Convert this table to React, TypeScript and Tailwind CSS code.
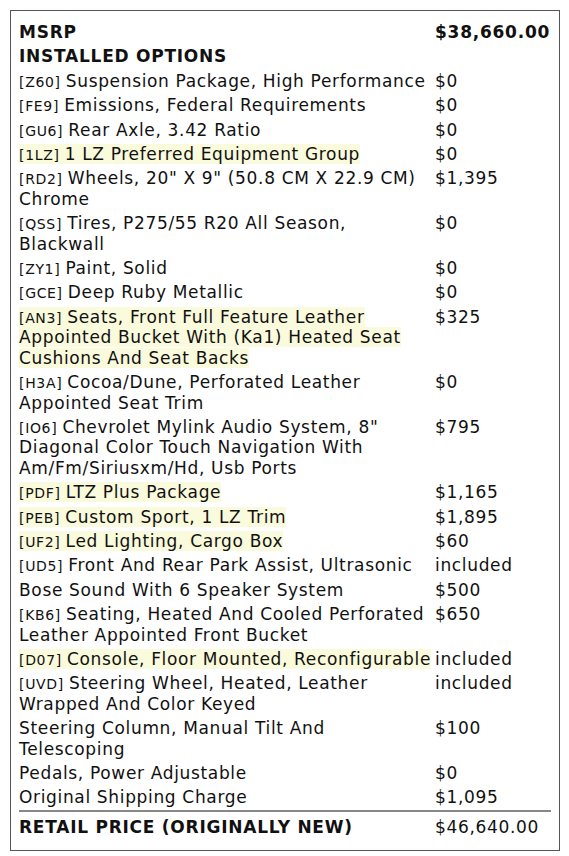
const rows: { code?: string; text: string; price: string; hl?: boolean }[] = [
  { code: "Z60", text: "Suspension Package, High Performance", price: "$0" },
  { code: "FE9", text: "Emissions, Federal Requirements", price: "$0" },
  { code: "GU6", text: "Rear Axle, 3.42 Ratio", price: "$0" },
  { code: "1LZ", text: "1 LZ Preferred Equipment Group", price: "$0", hl: true },
  { code: "RD2", text: "Wheels, 20\" X 9\" (50.8 CM X 22.9 CM) Chrome", price: "$1,395" },
  { code: "QSS", text: "Tires, P275/55 R20 All Season, Blackwall", price: "$0" },
  { code: "ZY1", text: "Paint, Solid", price: "$0" },
  { code: "GCE", text: "Deep Ruby Metallic", price: "$0" },
  {
    code: "AN3",
    text: "Seats, Front Full Feature Leather Appointed Bucket With (Ka1) Heated Seat Cushions And Seat Backs",
    price: "$325",
    hl: true,
  },
  { code: "H3A", text: "Cocoa/Dune, Perforated Leather Appointed Seat Trim", price: "$0" },
  {
    code: "IO6",
    text: "Chevrolet Mylink Audio System, 8\" Diagonal Color Touch Navigation With Am/Fm/Siriusxm/Hd, Usb Ports",
    price: "$795",
  },
  { code: "PDF", text: "LTZ Plus Package", price: "$1,165", hl: true },
  { code: "PEB", text: "Custom Sport, 1 LZ Trim", price: "$1,895", hl: true },
  { code: "UF2", text: "Led Lighting, Cargo Box", price: "$60", hl: true },
  { code: "UD5", text: "Front And Rear Park Assist, Ultrasonic", price: "included" },
  { text: "Bose Sound With 6 Speaker System", price: "$500" },
  { code: "KB6", text: "Seating, Heated And Cooled Perforated Leather Appointed Front Bucket", price: "$650" },
  { code: "D07", text: "Console, Floor Mounted, Reconfigurable", price: "included", hl: true },
  { code: "UVD", text: "Steering Wheel, Heated, Leather Wrapped And Color Keyed", price: "included" },
  { text: "Steering Column, Manual Tilt And Telescoping", price: "$100" },
  { text: "Pedals, Power Adjustable", price: "$0" },
  { text: "Original Shipping Charge", price: "$1,095" },
];

export default function App() {
  return (
    <div className="bg-white w-[569px] h-[856px] pt-[10px] pl-[10px] font-['DejaVu_Sans',sans-serif] text-[#111] text-[17px] leading-[20.4px] tracking-[0.66px]">
      <div className="w-[550px] h-[841px] border border-[#555] px-[8px] pt-[9px]">
        <div className="grid grid-cols-[416px_1fr] font-bold tracking-[0.75px]">
          <div className="py-[2px]">MSRP</div>
          <div className="py-[2px]">$38,660.00</div>
          <div className="py-[2px]">INSTALLED OPTIONS</div>
          <div />
        </div>
        {rows.map((r, i) => (
          <div key={i} className="grid grid-cols-[416px_1fr] py-[2px]">
            <div>
              <span className={r.hl ? "bg-[#fafadc] box-decoration-clone" : ""}>
                {r.code && <span className="text-[14px] leading-none">[{r.code}] </span>}
                {r.text}
              </span>
            </div>
            <div>{r.price}</div>
          </div>
        ))}
        <div className="grid grid-cols-[416px_1fr] border-t-2 border-[#888] pt-[5px]">
          <div className="font-bold tracking-[0.75px]">RETAIL PRICE (ORIGINALLY NEW)</div>
          <div>$46,640.00</div>
        </div>
      </div>
    </div>
  );
}
